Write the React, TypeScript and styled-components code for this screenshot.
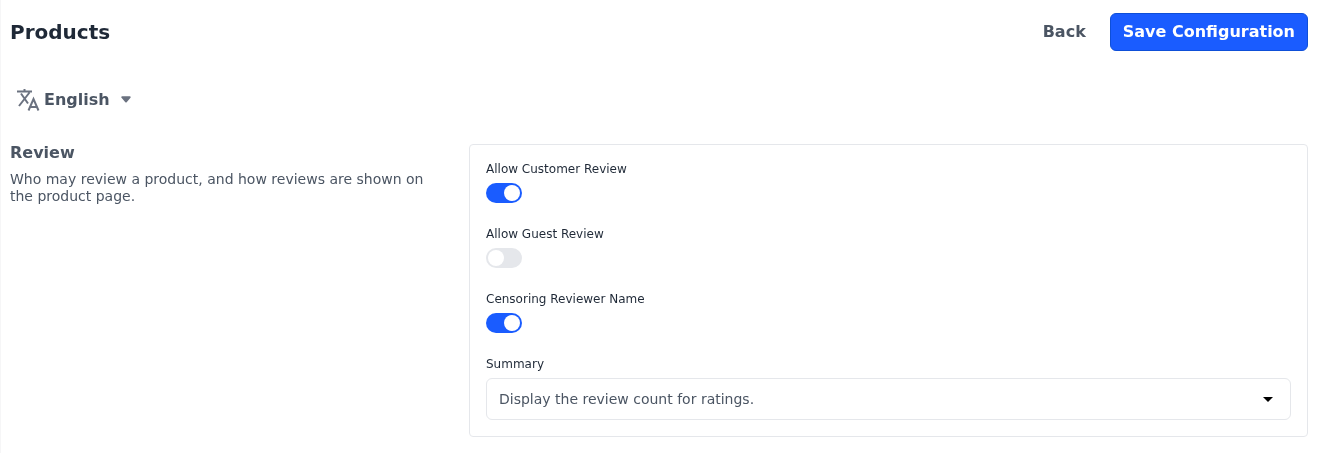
import React from "react";
import styled, { createGlobalStyle } from "styled-components";

const Global = createGlobalStyle`
  html, body { margin: 0; padding: 0; background: #fff; }
  * { box-sizing: border-box; }
  body { font-family: "DejaVu Sans", sans-serif; }
`;

const Page = styled.div`
  width: 1324px;
  height: 453px;
  overflow: hidden;
  padding: 13px 16px 0 10px;
  will-change: transform;
  box-shadow: inset 1px 0 0 #f6f6f7;
`;

const Header = styled.header`
  display: flex;
  align-items: center;
  justify-content: space-between;
  height: 38px;
`;

const Title = styled.h1`
  margin: 0;
  font-size: 20px;
  line-height: 28px;
  font-weight: 700;
  color: #1f2937;
`;

const Actions = styled.div`
  display: flex;
  align-items: center;
  gap: 6px;
`;

const BackLink = styled.a`
  padding: 6px 18px;
  font-size: 16px;
  font-weight: 700;
  line-height: 24px;
  color: #4b5563;
`;

const PrimaryButton = styled.button`
  height: 38px;
  padding: 0 12px 2px;
  border: 1px solid #0e4fd8;
  border-radius: 6px;
  background: #1a5cff;
  color: #fff;
  font-family: inherit;
  font-size: 16px;
  font-weight: 700;
`;

const LocaleRow = styled.div`
  display: flex;
  align-items: center;
  height: 24px;
  margin-top: 36px;
  padding-left: 6px;
`;

const LocaleName = styled.span`
  margin-left: 4px;
  font-size: 16px;
  font-weight: 700;
  color: #4b5563;
`;

const CaretIcon = styled.svg`
  margin-left: 11px;
`;

const Columns = styled.div`
  display: flex;
  gap: 40px;
  margin-top: 33px;
`;

const Intro = styled.div`
  width: 419px;
`;

const SectionTitle = styled.p`
  margin: 0;
  font-size: 16px;
  line-height: 18px;
  font-weight: 700;
  color: #4b5563;
`;

const SectionText = styled.p`
  margin: 9px 0 0;
  font-size: 14px;
  line-height: 17px;
  color: #4b5563;
`;

const Card = styled.section`
  flex: 1;
  height: 293px;
  padding: 16px;
  background: #fff;
  border: 1px solid #e5e7eb;
  border-radius: 4px;
`;

const Field = styled.div`
  margin-bottom: 23px;
`;

const Label = styled.label`
  display: block;
  height: 16px;
  font-size: 12px;
  line-height: 16px;
  color: #1f2937;
`;

const Toggle = styled.span<{ $on?: boolean }>`
  display: flex;
  align-items: center;
  justify-content: ${(p) => (p.$on ? "flex-end" : "flex-start")};
  width: 36px;
  height: 20px;
  margin-top: 6px;
  padding: 2px;
  border-radius: 10px;
  background: ${(p) => (p.$on ? "#1a5cff" : "#e5e7eb")};
`;

const Knob = styled.span`
  width: 16px;
  height: 16px;
  border-radius: 50%;
  background: #fff;
`;

const Select = styled.div`
  display: flex;
  align-items: center;
  justify-content: space-between;
  height: 42px;
  margin-top: 6px;
  padding: 0 17px 0 12px;
  border: 1px solid #e5e7eb;
  border-radius: 6px;
  font-size: 14px;
  color: #4b5563;
`;

const SelectCaret = styled.span`
  width: 0;
  height: 0;
  border-left: 5px solid transparent;
  border-right: 5px solid transparent;
  border-top: 5px solid #000;
`;

const TranslateIcon = () => (
  <svg width="24" height="24" viewBox="0 0 24 24" fill="none" stroke="#6b7280" strokeWidth="2">
    <path d="M1 4.5h15M8.5 2v2.5M5 6.5l7 10M13.5 5.5L3 19M12.5 23.5l5-11.5 5 11.5M14.5 20h6" />
  </svg>
);

export default function App() {
  return (
    <Page>
      <Global />
      <Header>
        <Title>Products</Title>
        <Actions>
          <BackLink>Back</BackLink>
          <PrimaryButton>Save Configuration</PrimaryButton>
        </Actions>
      </Header>
      <LocaleRow>
        <TranslateIcon />
        <LocaleName>English</LocaleName>
        <CaretIcon width="10" height="7" viewBox="0 0 10 7">
          <path d="M1.2 1.2h7.6L5 5.6z" fill="#6b7280" stroke="#6b7280" strokeWidth="1.8" strokeLinejoin="round" />
        </CaretIcon>
      </LocaleRow>
      <Columns>
        <Intro>
          <SectionTitle>Review</SectionTitle>
          <SectionText>Who may review a product, and how reviews are shown on the product page.</SectionText>
        </Intro>
        <Card>
          <Field>
            <Label>Allow Customer Review</Label>
            <Toggle $on><Knob /></Toggle>
          </Field>
          <Field>
            <Label>Allow Guest Review</Label>
            <Toggle><Knob /></Toggle>
          </Field>
          <Field>
            <Label>Censoring Reviewer Name</Label>
            <Toggle $on><Knob /></Toggle>
          </Field>
          <Field>
            <Label>Summary</Label>
            <Select>
              Display the review count for ratings.
              <SelectCaret />
            </Select>
          </Field>
        </Card>
      </Columns>
    </Page>
  );
}
